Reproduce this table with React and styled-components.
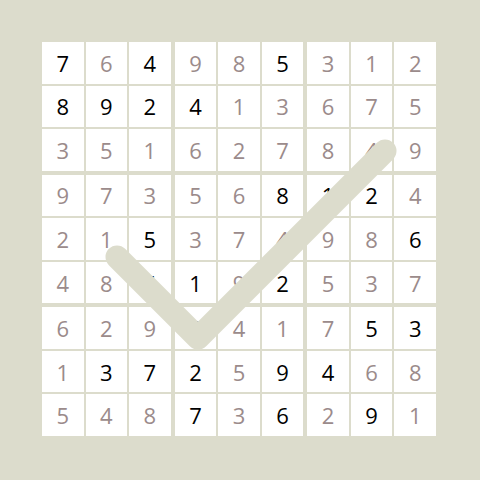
import React from 'react';
import styled, { createGlobalStyle } from 'styled-components';

const GlobalStyle = createGlobalStyle`
  html, body {
    margin: 0;
    background: #dcdccc;
  }
`;

const Page = styled.div`
  width: 480px;
  height: 480px;
  padding: 42px;
  box-sizing: border-box;
`;

const Board = styled.div`
  position: relative;
  width: 394px;
  height: 394px;
  display: grid;
  grid-template-columns: repeat(3, 1fr);
  grid-template-rows: repeat(3, 1fr);
  gap: 4px;
`;

const Box = styled.div`
  display: grid;
  grid-template-columns: repeat(3, 1fr);
  grid-template-rows: repeat(3, 1fr);
  gap: 2px;
`;

const Cell = styled.div`
  background: #fff;
  display: flex;
  align-items: center;
  justify-content: center;
  font-family: 'Open Sans', sans-serif;
  font-size: 22px;
  color: ${({ $given }) => ($given ? '#000' : '#9b8b8b')};
`;

const Check = styled.svg`
  position: absolute;
  left: -42px;
  top: -42px;
  width: 480px;
  height: 480px;
  pointer-events: none;
`;

// "*" marks a given digit
const ROWS = [
  '7* 6 4* 9 8 5* 3 1 2',
  '8* 9* 2* 4* 1 3 6 7 5',
  '3 5 1 6 2 7 8 4 9',
  '9 7 3 5 6 8* 1* 2* 4',
  '2 1 5* 3 7 4 9 8 6*',
  '4 8 6* 1* 9 2* 5 3 7',
  '6 2 9 8* 4 1 7 5* 3*',
  '1 3* 7* 2* 5 9* 4* 6 8',
  '5 4 8 7* 3 6* 2 9* 1',
].map((r) => r.split(' ').map((s) => ({ v: s[0], given: s.endsWith('*') })));

const App = () => (
  <Page>
    <GlobalStyle />
    <Board>
      {[0, 1, 2].map((br) =>
        [0, 1, 2].map((bc) => (
          <Box key={`${br}-${bc}`}>
            {[0, 1, 2].map((r) =>
              [0, 1, 2].map((c) => {
                const cell = ROWS[br * 3 + r][bc * 3 + c];
                return (
                  <Cell key={`${r}-${c}`} $given={cell.given}>
                    {cell.v}
                  </Cell>
                );
              })
            )}
          </Box>
        ))
      )}
      <Check viewBox="0 0 480 480">
        <polyline
          points="117,257 198,338 385,151"
          fill="none"
          stroke="#dcdccc"
          strokeWidth="23"
          strokeLinecap="round"
          strokeLinejoin="round"
        />
      </Check>
    </Board>
  </Page>
);

export default App;
